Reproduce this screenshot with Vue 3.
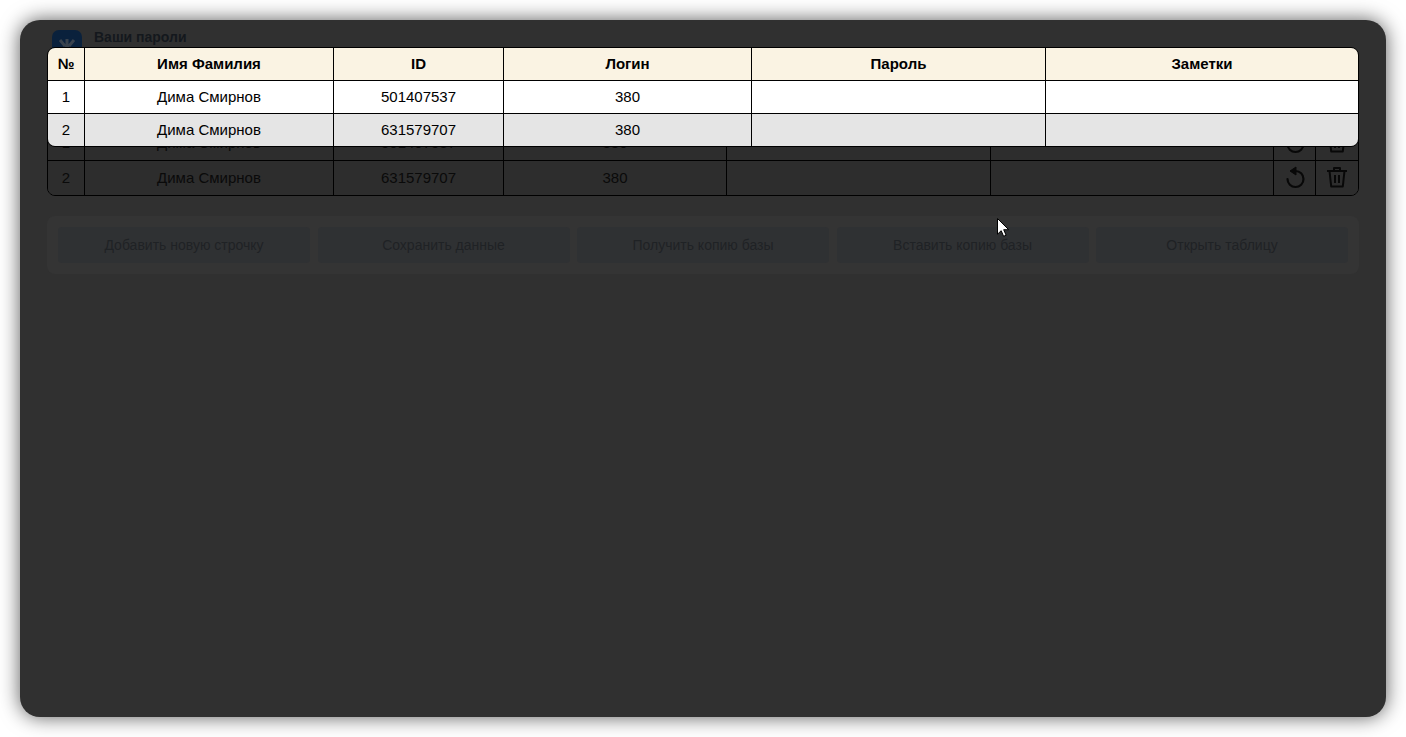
<script setup>
const overCols = ['№', 'Имя Фамилия', 'ID', 'Логин', 'Пароль', 'Заметки']
const rows = [
  { n: 1, name: 'Дима Смирнов', id: '501407537', login: '380' },
  { n: 2, name: 'Дима Смирнов', id: '631579707', login: '380' }
]
const buttons = ['Добавить новую строчку', 'Сохранить данные', 'Получить копию базы', 'Вставить копию базы', 'Открыть таблицу']
</script>

<template>
  <div class="window">
    <header class="head">
      <svg class="logo" viewBox="0 0 30 30" width="30" height="30">
        <rect width="30" height="30" rx="7" fill="#0a213c" />
        <path d="M8 10l5 6M15 9v7M22 10l-5 6" stroke="#39424d" stroke-width="3" fill="none" />
        <path d="M9 24l5-7h2l5 7" stroke="#39424d" stroke-width="3" fill="none" />
      </svg>
      <div class="title">Ваши пароли</div>
    </header>

    <section class="under">
      <div class="u-row u-head">
        <div class="cell"></div><div class="cell"></div><div class="cell"></div>
        <div class="cell"></div><div class="cell"></div><div class="cell"></div>
        <div class="cell"></div><div class="cell"></div>
      </div>
      <div v-for="r in rows" :key="r.n" class="u-row">
        <div class="cell">{{ r.n }}</div>
        <div class="cell">{{ r.name }}</div>
        <div class="cell">{{ r.id }}</div>
        <div class="cell">{{ r.login }}</div>
        <div class="cell"></div>
        <div class="cell"></div>
        <div class="cell">
          <svg viewBox="0 0 24 24" width="24" height="24" fill="none" stroke="#080808" stroke-width="2.2">
            <path d="M12.500 6a8 8 0 1 1-8 8" stroke-linecap="round" />
            <path d="M13 2L7 6l6 4z" fill="#080808" stroke-width="1" stroke-linejoin="round" />
          </svg>
        </div>
        <div class="cell">
          <svg viewBox="0 0 24 24" width="24" height="24" fill="none" stroke="#080808" stroke-width="2">
            <path d="M2 6h20M9 6V3h6v3M4.500 6l1.700 15.500h11.600L19.500 6M10 10v8M14 10v8" stroke-linejoin="round" />
          </svg>
        </div>
      </div>
    </section>

    <nav class="actions">
      <div v-for="b in buttons" :key="b" class="btn">{{ b }}</div>
    </nav>

    <section class="over">
      <div class="o-row o-head">
        <div v-for="c in overCols" :key="c" class="cell">{{ c }}</div>
      </div>
      <div v-for="r in rows" :key="r.n" class="o-row" :class="{ alt: r.n === 2 }">
        <div class="cell">{{ r.n }}</div>
        <div class="cell">{{ r.name }}</div>
        <div class="cell">{{ r.id }}</div>
        <div class="cell">{{ r.login }}</div>
        <div class="cell"></div>
        <div class="cell"></div>
      </div>
    </section>

    <svg class="cursor" viewBox="0 0 12 19" width="12" height="19">
      <path d="M.5.500v15.700l3.700-3.500 2.400 5.600 2.500-1.100-2.400-5.500h5z" fill="#fff" stroke="#000" stroke-width="1" />
    </svg>
  </div>
</template>

<style scoped>
.window {
  position: relative;
  box-sizing: border-box;
  margin: 20px;
  height: 697px;
  padding: 10px 27px 0;
  background: #303030;
  border-radius: 20px;
  box-shadow: 0 0 20px rgba(0, 0, 0, 0.65);
  font: 14px "Liberation Sans", Arial, sans-serif;
  color: #0a0a0a;
}
.head {
  display: flex;
  gap: 12px;
  height: 48px;
  padding-left: 5px;
}
.title {
  font-weight: 700;
  color: #14181d;
  margin-top: -1px;
}
.under {
  border: 1px solid #000;
  border-radius: 8px;
  overflow: hidden;
  font-size: 15px;
}
.u-row {
  display: grid;
  grid-template-columns: 36px 249px 170px 223px 264px 283px 42px 1fr;
  height: 35px;
  box-sizing: border-box;
  background: #2d2d2d;
}
.u-row + .u-row { border-top: 1px solid #000; }
.u-head { height: 46px; }
.cell {
  display: flex;
  align-items: center;
  justify-content: center;
  padding-bottom: 2px;
  border-left: 1px solid #000;
}
.cell:first-child { border-left: 0; }
.actions {
  display: flex;
  gap: 7.5px;
  margin-top: 20px;
  padding: 11px;
  background: #343434;
  border-radius: 8px;
}
.btn {
  flex: 1;
  height: 36px;
  display: flex;
  align-items: center;
  justify-content: center;
  background: #2f3133;
  border-radius: 4px;
  color: #1f2225;
}
.over {
  position: absolute;
  left: 27px;
  right: 27px;
  top: 27px;
  border: 1px solid #000;
  border-radius: 8px;
  overflow: hidden;
  color: #000;
  font-size: 15px;
}
.o-row {
  display: grid;
  grid-template-columns: 36px 249px 170px 248px 294px 1fr;
  height: 33px;
  box-sizing: border-box;
  background: #fff;
  border-top: 1px solid #000;
}
.o-head {
  height: 32px;
  border-top: 0;
  background: #faf3e3;
  font-weight: 700;
}
.alt { background: #e5e5e5; }
.cursor {
  position: absolute;
  left: 977px;
  top: 198px;
}
</style>
